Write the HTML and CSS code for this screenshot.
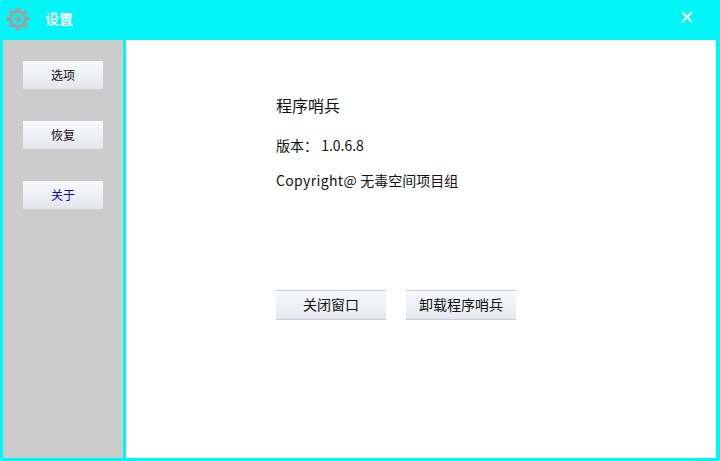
FILE: index.html
```html
<!DOCTYPE html>
<html lang="zh-CN">
<head>
    <meta charset="UTF-8">
    <title>设置</title>
    <link rel="stylesheet" href="styles.css">
</head>
<body>
    <div class="window">
        <div class="title-bar">
            <svg class="gear" width="26" height="26" viewBox="0 0 26 26">
                <g fill="#a0a0a0">
                    <rect x="11" y="1.5" width="4" height="23"/>
                    <rect x="11" y="1.5" width="4" height="23" transform="rotate(45 13 13)"/>
                    <rect x="11" y="1.5" width="4" height="23" transform="rotate(90 13 13)"/>
                    <rect x="11" y="1.5" width="4" height="23" transform="rotate(135 13 13)"/>
                </g>
                <circle cx="13" cy="13" r="7.5" fill="#00f6f6" stroke="#a0a0a0" stroke-width="3"/>
                <circle cx="13" cy="13" r="3" fill="#a0a0a0"/>
            </svg>
            <span class="title">设置</span>
            <svg class="close" width="12" height="12" viewBox="0 0 12 12">
                <path d="M1 1 L11 11 M11 1 L1 11" stroke="#f2f6ff" stroke-width="2" fill="none"/>
            </svg>
        </div>
        <div class="main">
            <div class="sidebar">
                <button class="side-btn">选项</button>
                <button class="side-btn">恢复</button>
                <button class="side-btn active">关于</button>
            </div>
            <div class="content">
                <h1 class="app-name">程序哨兵</h1>
                <p class="version">版本： 1.0.6.8</p>
                <p class="copyright"><span class="latin">Copyright@</span> 无毒空间项目组</p>
                <div class="actions">
                    <button class="big-btn">关闭窗口</button>
                    <button class="big-btn">卸载程序哨兵</button>
                </div>
            </div>
        </div>
    </div>
</body>
</html>
```

FILE: styles.css
```css
html, body {
    margin: 0;
    padding: 0;
    background-color: #fff;
}
body {
    font-family: "Noto Sans CJK SC", "Liberation Sans", sans-serif;
}
button {
    font-family: inherit;
    border: none;
    padding: 0;
    color: #111;
}
.window {
    width: 720px;
    height: 461px;
    box-sizing: border-box;
    display: flex;
    flex-direction: column;
    background-color: #00f6f6;
    padding: 0 4px 3px 3px;
    border-radius: 2px;
    overflow: hidden;
}
.title-bar {
    height: 40px;
    flex: none;
    display: flex;
    align-items: center;
    margin-left: -3px;
    padding-left: 5px;
}
.gear {
    flex: none;
    margin-top: -2px;
}
.title {
    margin-left: 14px;
    margin-top: -5px;
    font-size: 14px;
    font-weight: bold;
    color: #fff;
}
.close {
    margin-left: auto;
    margin-right: 23px;
    margin-top: -7px;
}
.main {
    flex: 1;
    display: flex;
    min-height: 0;
}
.sidebar {
    width: 120px;
    flex: none;
    margin-right: 3px;
    background-color: #cccccc;
    display: flex;
    flex-direction: column;
    align-items: center;
    gap: 32px;
    padding-top: 21px;
    box-sizing: border-box;
}
.side-btn {
    width: 80px;
    height: 28px;
    padding-bottom: 2px;
    font-size: 12px;
    background: linear-gradient(to bottom, #f8f9fb, #e4e6ec);
}
.side-btn.active {
    color: #0000c8;
}
.content {
    flex: 1;
    background-color: #fff;
    padding: 54px 0 0 150px;
    color: #111;
}
.app-name {
    margin: 0;
    font-size: 16px;
    font-weight: normal;
    line-height: 22px;
}
.version {
    margin: 19px 0 0;
    font-size: 14px;
    line-height: 20px;
}
.copyright {
    margin: 15px 0 0;
    font-size: 14px;
    line-height: 20px;
}
.latin {
    letter-spacing: 0.35px;
}
.actions {
    display: flex;
    gap: 20px;
    margin-top: 100px;
}
.big-btn {
    width: 110px;
    height: 30px;
    box-sizing: border-box;
    padding-bottom: 2px;
    font-size: 14px;
    background: linear-gradient(to bottom, #f8f9fb, #e6e8ed);
    border-top: 1px solid #c6ced8;
    border-bottom: 1px solid #c6ced8;
}
```
